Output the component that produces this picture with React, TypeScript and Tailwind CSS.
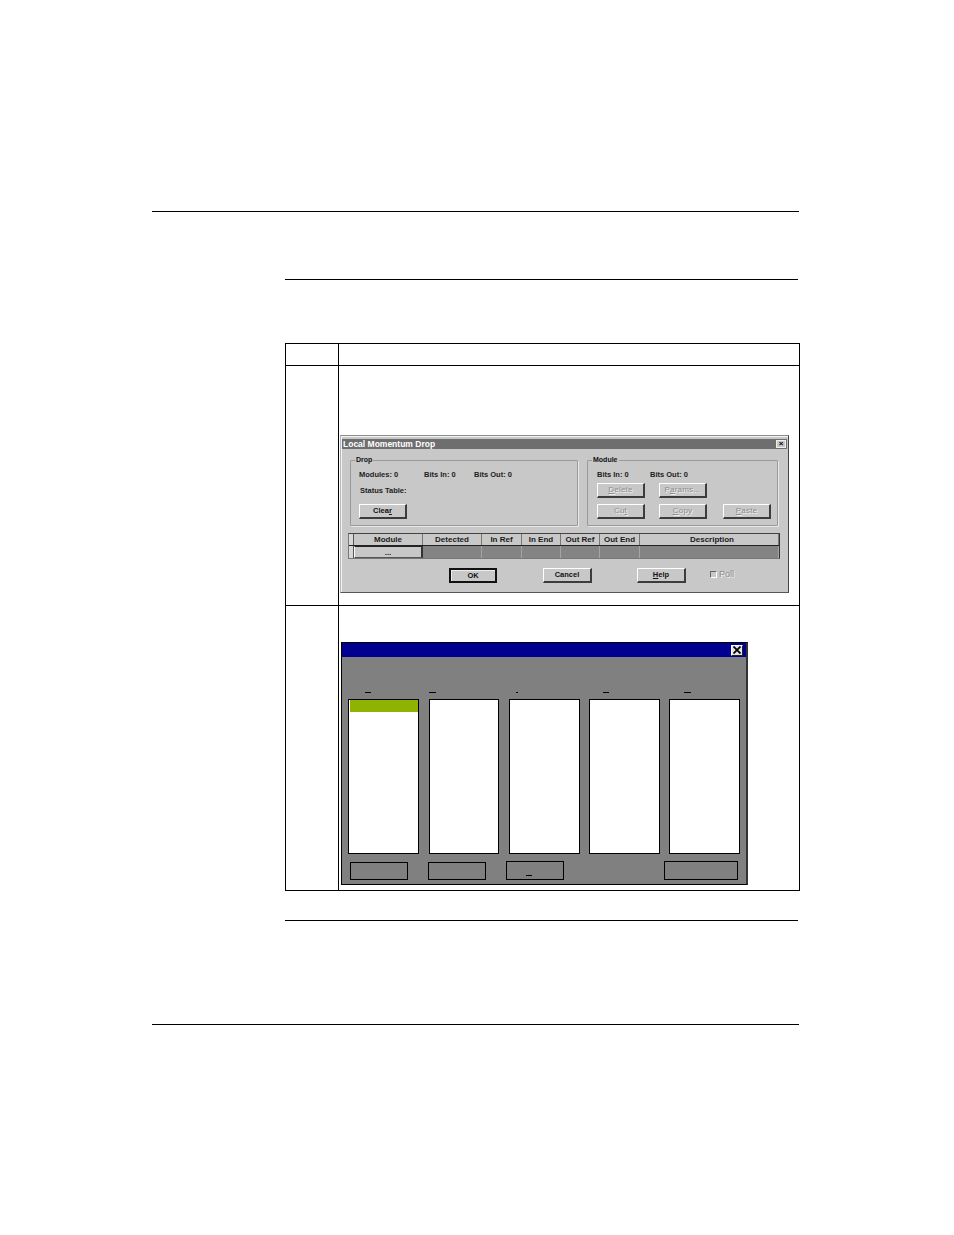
const font = "font-['Liberation_Sans',Arial,sans-serif]";

function WinButton({
  label,
  hot,
  disabled,
  wide,
  className = "",
}: {
  label?: string;
  hot?: number;
  disabled?: boolean;
  wide?: boolean;
  className?: string;
}) {
  const text = label ?? "";
  const i = hot ?? -1;
  return (
    <div
      className={`flex h-[15px] ${wide ? "w-[49px]" : "w-[48px]"} shrink-0 items-center justify-center border-t border-l border-t-white border-l-white border-r-2 border-b-2 border-r-[#3c3c3c] border-b-[#3c3c3c] leading-none ${
        disabled
          ? "text-[8px] font-normal tracking-[0.2px] text-[#8e8e8e] [text-shadow:1px_1px_0_#f0f0f0]"
          : "text-[7.5px] font-bold text-[#111]"
      } ${className}`}
    >
      {i >= 0 ? (
        <span>
          {text.slice(0, i)}
          <u>{text[i]}</u>
          {text.slice(i + 1)}
        </span>
      ) : (
        text
      )}
    </div>
  );
}

function GroupBox({
  title,
  className,
  children,
}: {
  title: string;
  className: string;
  children: React.ReactNode;
}) {
  return (
    <div className={`relative h-[66px] rounded-[1px] border border-[#9a9a9a] shadow-[1px_1px_0_#e8e8e8] ${className}`}>
      <span className="absolute -top-[6px] left-[4px] bg-[#c8c8c8] px-[1px] text-[7px] leading-[9px] font-bold text-[#111]">
        {title}
      </span>
      {children}
    </div>
  );
}

const gridCols = [
  { name: "Module", w: "w-[69px]" },
  { name: "Detected", w: "w-[59px]" },
  { name: "In Ref", w: "w-[40px]" },
  { name: "In End", w: "w-[39px]" },
  { name: "Out Ref", w: "w-[39px]" },
  { name: "Out End", w: "w-[40px]" },
  { name: "Description", w: "flex-1" },
];

function ModuleGrid() {
  return (
    <div className="mt-[7px] ml-[6px] h-[26px] w-[432px] border border-t-[#444] border-l-[#777] border-r-[#333] border-b-[#777] bg-[#c8c8c8]">
      <div className="flex h-[12px] border-b border-b-[#222]">
        <div className="w-[5px] shrink-0 border-r border-[#555] bg-[#d8d8d8]" />
        {gridCols.map((c) => (
          <div
            key={c.name}
            className={`${c.w} flex shrink-0 items-center justify-center border-r border-r-[#777] text-[8px] leading-none font-bold text-[#1a1a1a] ${c.name === "Description" ? "pl-[6px]" : ""}`}
          >
            {c.name}
          </div>
        ))}
      </div>
      <div className="flex h-[12px]">
        <div className="w-[5px] shrink-0 border-r border-[#555] bg-[#d8d8d8]" />
        {gridCols.map((c, i) =>
          i === 0 ? (
            <div
              key={c.name}
              className={`${c.w} flex shrink-0 items-end justify-center border-t border-l border-t-[#222] border-l-white border-r-2 border-r-[#333] border-b border-b-[#555] bg-[#c8c8c8] text-[8px] leading-[8px] font-bold text-[#222]`}
            >
              ...
            </div>
          ) : (
            <div
              key={c.name}
              className={`${c.w} shrink-0 border-r border-r-[#a5a5a5] bg-[#848484]`}
            />
          ),
        )}
      </div>
    </div>
  );
}

function LocalDropDialog() {
  return (
    <div className="ml-[1px] h-[158px] w-[449px] border border-t-[#8a8a8a] border-l-[#b8b8b8] border-r-[#444] border-b-[#555] bg-[#c8c8c8] px-[1px] pt-[3px] shadow-[inset_1px_1px_0_#f4f4f4]">
      <div className="flex h-[10px] items-center justify-between bg-[#6e6e6e] pr-[1px] pl-[1px]">
        <span className="text-[8.5px] leading-none font-bold text-white">
          Local Momentum Drop
        </span>
        <span className="flex h-[8px] w-[10px] items-center justify-center border border-[#eee] bg-[#c8c8c8] text-[8px] leading-none font-bold text-black">
          ×
        </span>
      </div>

      <div className="mt-[11px] flex pl-[8px]">
        <GroupBox title="Drop" className="w-[228px]">
          <div className="flex pt-[9px] pl-[8px] text-[7.5px] leading-[9px] font-bold text-[#222]">
            <span className="w-[65px]">Modules: 0</span>
            <span className="w-[50px]">Bits In: 0</span>
            <span>Bits Out: 0</span>
          </div>
          <div className="mt-[7px] pl-[9px] text-[7.5px] leading-[9px] font-bold text-[#222]">
            Status Table:
          </div>
          <WinButton label="Clear" hot={4} className="mt-[9px] ml-[8px]" />
        </GroupBox>
        <GroupBox title="Module" className="ml-[9px] w-[191px]">
          <div className="flex pt-[9px] pl-[9px] text-[7.5px] leading-[9px] font-bold text-[#222]">
            <span className="w-[53px]">Bits In: 0</span>
            <span>Bits Out: 0</span>
          </div>
          <div className="mt-[4px] flex pl-[9px]">
            <WinButton label="Delete" hot={0} disabled />
            <WinButton label="Params..." hot={1} disabled className="ml-[14px]" />
          </div>
          <div className="mt-[6px] flex pl-[9px]">
            <WinButton label="Cut" hot={2} disabled />
            <WinButton label="Copy" hot={0} disabled className="ml-[14px]" />
            <WinButton label="Paste" hot={0} disabled className="ml-[16px]" />
          </div>
        </GroupBox>
      </div>

      <ModuleGrid />

      <div className="mt-[9px] flex items-center pl-[107px]">
        <div className="flex h-[15px] w-[48px] items-center justify-center border-2 border-[#111] text-[7.5px] leading-none font-bold text-[#111] shadow-[inset_1px_1px_0_#eee]">
          OK
        </div>
        <WinButton label="Cancel" wide className="ml-[46px]" />
        <WinButton label="Help" hot={0} wide className="ml-[45px]" />
        <div className="mt-[-2px] ml-[24px] flex items-center text-[9px] leading-none text-[#8e8e8e] [text-shadow:1px_1px_0_#f0f0f0]">
          <span className="mr-[2px] h-[7px] w-[7px] border-t border-l border-t-[#666] border-l-[#666] border-r border-b border-r-white border-b-white" />
          Poll
        </div>
      </div>
    </div>
  );
}

const lists = [
  { w: "w-[71px]", gap: "", mark: "ml-[17px] w-[6px]", sel: true },
  { w: "w-[70px]", gap: "ml-[10px]", mark: "ml-0 w-[7px]", sel: false },
  { w: "w-[71px]", gap: "ml-[10px]", mark: "ml-[7px] w-[2px]", sel: false },
  { w: "w-[71px]", gap: "ml-[9px]", mark: "ml-[14px] w-[6px]", sel: false },
  { w: "w-[71px]", gap: "ml-[9px]", mark: "ml-[15px] w-[7px]", sel: false },
];

function SelectDialog() {
  return (
    <div className="ml-[2px] h-[243px] w-[407px] border border-black border-r-2 border-r-[#333] bg-[#808080]">
      <div className="flex h-[14px] items-center justify-end bg-[#000090] pr-[3px]">
        <span className="flex h-[11px] w-[12px] items-center justify-center border border-t-white border-l-white border-r-[#222] border-b-[#222] bg-[#e4e4e4]">
          <svg width="8" height="8" viewBox="0 0 8 8">
            <path d="M0.5 0.5 L7.5 7.5 M7.5 0.5 L0.5 7.5" stroke="#000" strokeWidth="1.8" />
          </svg>
        </span>
      </div>

      <div className="mt-[35px] flex pl-[6px]">
        {lists.map((l, i) => (
          <div key={i} className={`${l.w} ${l.gap} shrink-0`}>
            <div className={`mb-[6px] h-px bg-black ${l.mark}`} />
            <div className="h-[155px] border border-black bg-white pl-px">
              {l.sel && <div className="h-[12px] bg-[#8fb300]" />}
            </div>
          </div>
        ))}
      </div>

      <div className="mt-[7px] flex items-end pl-[8px]">
        <div className="h-[18px] w-[58px] border border-black" />
        <div className="ml-[20px] h-[18px] w-[58px] border border-black" />
        <div className="ml-[20px] flex h-[19px] w-[58px] items-end border border-black pb-[3px] pl-[19px]">
          <div className="h-px w-[6px] bg-black" />
        </div>
        <div className="ml-[100px] h-[19px] w-[74px] border border-black" />
      </div>
    </div>
  );
}

export default function App() {
  return (
    <div className={`h-[1235px] w-[954px] overflow-hidden bg-white pt-[211px] ${font}`}>
      <div className="ml-[152px] h-px w-[647px] bg-black" />
      <div className="mt-[67px] ml-[285px] h-px w-[513px] bg-black" />

      <div className="mt-[63px] ml-[285px] w-[515px] border border-black">
        <div className="flex h-[22px] border-b border-black">
          <div className="w-[53px] shrink-0 border-r border-black" />
        </div>
        <div className="flex h-[240px] border-b border-black">
          <div className="w-[53px] shrink-0 border-r border-black" />
          <div className="pt-[69px]">
            <LocalDropDialog />
          </div>
        </div>
        <div className="flex h-[284px]">
          <div className="w-[53px] shrink-0 border-r border-black" />
          <div className="pt-[36px]">
            <SelectDialog />
          </div>
        </div>
      </div>

      <div className="mt-[29px] ml-[285px] h-px w-[513px] bg-black" />
      <div className="mt-[103px] ml-[152px] h-px w-[647px] bg-black" />
    </div>
  );
}
